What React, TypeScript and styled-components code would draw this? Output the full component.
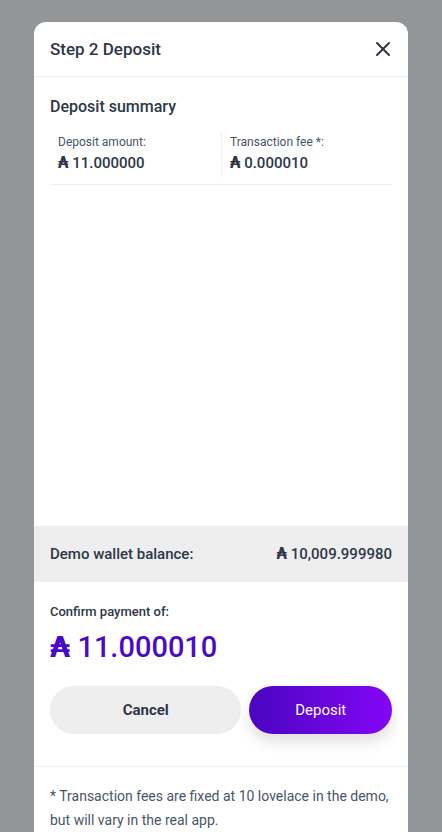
import styled, { createGlobalStyle } from 'styled-components'

const GlobalStyle = createGlobalStyle`
  html, body {
    margin: 0;
    padding: 0;
    background: #939699;
    font-family: Roboto, 'Noto Sans', 'DejaVu Sans', sans-serif;
    color: #2d3748;
  }
  * { box-sizing: border-box; }
`

const ADA = '\u20B3'

const St = {
  Page: styled.div`
    position: relative;
    width: 442px;
    height: 832px;
    overflow: hidden;
    background: #939699;
  `,
  TopBar: styled.div`
    height: 40px;
    border-bottom: 1px solid #9c9795;
  `,
  Modal: styled.div`
    position: absolute;
    top: 22px;
    left: 34px;
    width: 374px;
    background: #ffffff;
    border-radius: 12px 12px 0 0;
    display: flex;
    flex-direction: column;
  `,
  Header: styled.div`
    height: 55px;
    display: flex;
    align-items: center;
    justify-content: space-between;
    padding: 0 16px;
    border-bottom: 1px solid #edf2f7;
  `,
  Title: styled.h2`
    margin: 0;
    font-size: 17px;
    font-weight: 500;
    color: #2d3748;
  `,
  Close: styled.button`
    width: 24px;
    height: 24px;
    padding: 0;
    border: none;
    background: none;
    display: flex;
    align-items: center;
    justify-content: center;
    margin-right: -3px;
    color: #2d3748;
  `,
  Body: styled.div`
    height: 449px;
    padding: 19px 16px 0;
  `,
  SectionTitle: styled.h3`
    margin: 0;
    font-size: 16px;
    line-height: 22px;
    font-weight: 500;
  `,
  Summary: styled.div`
    margin-top: 13px;
    display: grid;
    grid-template-columns: 1fr 1fr;
    padding-bottom: 7px;
    border-bottom: 1px solid #edf2f7;
  `,
  Cell: styled.div<{ divided?: boolean }>`
    padding: 2px 8px;
    border-left: ${({ divided }) => (divided ? '1px solid #edf2f7' : 'none')};
  `,
  Label: styled.div`
    font-size: 12px;
    line-height: 18px;
    color: #4a5568;
  `,
  Value: styled.div`
    font-size: 15px;
    line-height: 24px;
    font-weight: 500;
    color: #2d3748;
  `,
  Ada: styled.span`
    font-family: 'DejaVu Sans', sans-serif;
    font-weight: 700;
  `,
  Balance: styled.div`
    height: 56px;
    background: #eeeeee;
    display: flex;
    align-items: center;
    justify-content: space-between;
    padding: 0 16px;
    font-size: 15px;
    font-weight: 500;
  `,
  Confirm: styled.div`
    padding: 22px 16px 32px;
    border-bottom: 1px solid #edf2f7;
  `,
  ConfirmLabel: styled.div`
    font-size: 13px;
    line-height: 16px;
    font-weight: 500;
  `,
  Amount: styled.div`
    margin-top: 7px;
    font-size: 29px;
    line-height: 40px;
    font-weight: 500;
    color: #4a0bc8;
  `,
  Buttons: styled.div`
    margin-top: 19px;
    display: flex;
    gap: 8px;
  `,
  Button: styled.button<{ primary?: boolean }>`
    height: 48px;
    border: none;
    border-radius: 24px;
    font-family: Roboto, sans-serif;
    font-size: 15px;
    cursor: pointer;
    width: ${({ primary }) => (primary ? '143px' : '192px')};
    font-weight: ${({ primary }) => (primary ? 400 : 700)};
    color: ${({ primary }) => (primary ? '#ffffff' : '#2d3748')};
    background: ${({ primary }) =>
      primary ? 'linear-gradient(90deg, #4a06c0 0%, #8405f7 100%)' : '#eeeeee'};
    box-shadow: ${({ primary }) => (primary ? '0 8px 14px rgba(0, 0, 0, 0.12)' : 'none')};
  `,
  Footnote: styled.p`
    margin: 0;
    padding: 17px 16px 24px;
    font-size: 14px;
    line-height: 24px;
    color: #4a5568;
  `,
}

const CloseIcon = () => (
  <svg width="16" height="16" viewBox="0 0 16 16" fill="none">
    <path d="M2 2L14 14M14 2L2 14" stroke="currentColor" strokeWidth="2" strokeLinecap="round" />
  </svg>
)

const Money = ({ value }: { value: string }) => (
  <>
    <St.Ada>{ADA}</St.Ada> {value}
  </>
)

const App = () => {
  return (
    <>
      <GlobalStyle />
      <St.Page>
        <St.TopBar />
        <St.Modal>
          <St.Header>
            <St.Title>Step 2 Deposit</St.Title>
            <St.Close aria-label="Close">
              <CloseIcon />
            </St.Close>
          </St.Header>
          <St.Body>
            <St.SectionTitle>Deposit summary</St.SectionTitle>
            <St.Summary>
              <St.Cell>
                <St.Label>Deposit amount:</St.Label>
                <St.Value>
                  <Money value="11.000000" />
                </St.Value>
              </St.Cell>
              <St.Cell divided>
                <St.Label>Transaction fee *:</St.Label>
                <St.Value>
                  <Money value="0.000010" />
                </St.Value>
              </St.Cell>
            </St.Summary>
          </St.Body>
          <St.Balance>
            <span>Demo wallet balance:</span>
            <span>
              <Money value="10,009.999980" />
            </span>
          </St.Balance>
          <St.Confirm>
            <St.ConfirmLabel>Confirm payment of:</St.ConfirmLabel>
            <St.Amount>
              <Money value="11.000010" />
            </St.Amount>
            <St.Buttons>
              <St.Button>Cancel</St.Button>
              <St.Button primary>Deposit</St.Button>
            </St.Buttons>
          </St.Confirm>
          <St.Footnote>
            * Transaction fees are fixed at 10 lovelace in the demo, but will vary in the real app.
          </St.Footnote>
        </St.Modal>
      </St.Page>
    </>
  )
}

export default App
